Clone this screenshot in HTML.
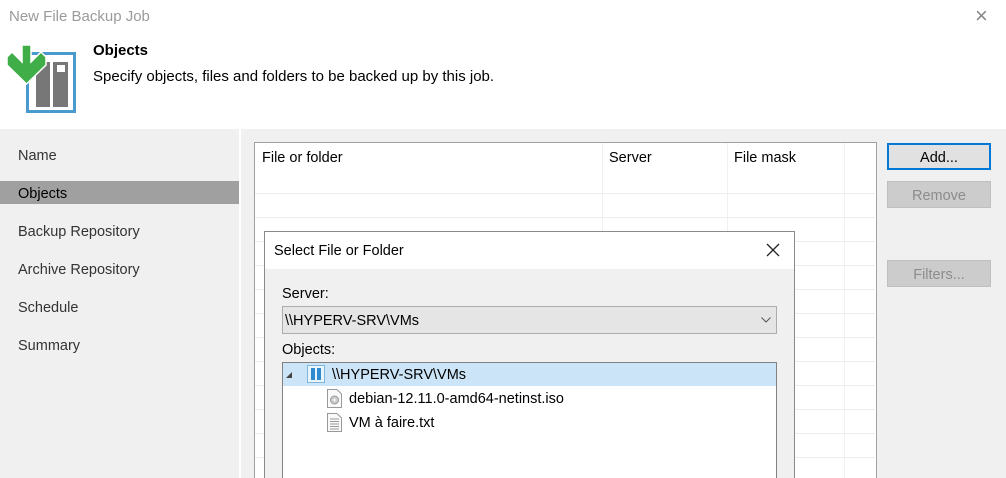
<!DOCTYPE html>
<html><head><meta charset="utf-8"><style>
*{margin:0;padding:0;box-sizing:border-box}
html,body{width:1006px;height:478px;overflow:hidden}
body{position:relative;background:#f0f0f0;font-family:"Segoe UI","Liberation Sans",sans-serif;font-size:15px;color:#000}
.a{position:absolute}
.hdr{left:0;top:0;width:1006px;height:129px;background:#fff}
.nav{font-size:14.5px;color:#333;left:18px}
.btn{left:887px;width:104px;height:27px;background:#e1e1e1;border:1px solid #adadad;text-align:center;line-height:29px;font-size:14.5px}
.dis{background:#cccccc;border-color:#bfbfbf;color:#8c8c8c}
.hl{left:255px;width:620px;height:1px;background:#ececec}
.vl{top:143px;width:1px;height:335px;background:#eef0f4}
</style></head><body>
<div class="a hdr"></div>
<div class="a" style="left:9px;top:8px;font-size:15px;color:#9a9a9a">New File Backup Job</div>
<div class="a" style="left:975px;top:3px;font-size:22px;color:#888;font-weight:300">×</div>
<svg class="a" style="left:0;top:40px" width="80" height="78" viewBox="0 0 80 78">
<rect x="27.5" y="13.5" width="47" height="58" fill="#fff" stroke="#4a9ad0" stroke-width="3"/>
<rect x="36" y="22" width="14" height="45" fill="#777"/>
<rect x="53" y="22" width="15" height="45" fill="#777"/>
<rect x="57" y="25" width="8" height="7" fill="#fff"/>
<path d="M22 5h9v17l10-10 5 5v8L26.5 44 7 25v-8l5-5 10 10z" fill="#3fae49" stroke="#fff" stroke-width="1.5"/>
</svg>
<div class="a" style="left:93px;top:42px;font-weight:bold;font-size:15px">Objects</div>
<div class="a" style="left:93px;top:68px;font-size:15px">Specify objects, files and folders to be backed up by this job.</div>
<div class="a" style="left:239px;top:129px;width:2px;height:349px;background:#fff"></div>
<div class="a" style="left:0;top:181px;width:239px;height:23px;background:#a0a0a0"></div>
<div class="a nav" style="top:148px">Name</div>
<div class="a nav" style="top:186px;color:#000">Objects</div>
<div class="a nav" style="top:224px">Backup Repository</div>
<div class="a nav" style="top:262px">Archive Repository</div>
<div class="a nav" style="top:300px">Schedule</div>
<div class="a nav" style="top:338px">Summary</div>
<div class="a" style="left:254px;top:142px;width:623px;height:340px;background:#fff;border:1px solid #a0a0a0"></div>
<div class="a vl" style="left:602px"></div><div class="a vl" style="left:727px"></div><div class="a vl" style="left:844px"></div>
<div class="a hl" style="top:193px"></div><div class="a hl" style="top:217px"></div><div class="a hl" style="top:241px"></div><div class="a hl" style="top:265px"></div><div class="a hl" style="top:289px"></div><div class="a hl" style="top:313px"></div><div class="a hl" style="top:337px"></div><div class="a hl" style="top:361px"></div><div class="a hl" style="top:385px"></div><div class="a hl" style="top:409px"></div><div class="a hl" style="top:433px"></div><div class="a hl" style="top:457px"></div>
<div class="a" style="left:262px;top:150px;font-size:14.5px">File or folder</div>
<div class="a" style="left:609px;top:150px;font-size:14.5px">Server</div>
<div class="a" style="left:734px;top:150px;font-size:14.5px">File mask</div>
<div class="a btn" style="top:143px;border:2px solid #0078d7;line-height:27px">Add...</div>
<div class="a btn dis" style="top:181px">Remove</div>
<div class="a btn dis" style="top:260px">Filters...</div>
<div class="a" style="left:264px;top:231px;width:531px;height:260px;background:#f0f0f0;border:1px solid #8a8a8a"></div>
<div class="a" style="left:265px;top:232px;width:529px;height:37px;background:#fff"></div>
<div class="a" style="left:274px;top:243px;font-size:14.5px">Select File or Folder</div>
<svg class="a" style="left:766px;top:243px" width="14" height="14"><path d="M1 1L13 13M13 1L1 13" stroke="#222" stroke-width="1.3"/></svg>
<div class="a" style="left:282px;top:286px;font-size:14.5px">Server:</div>
<div class="a" style="left:282px;top:306px;width:495px;height:28px;background:#e5e5e5;border:1px solid #adadad"></div>
<div class="a" style="left:285px;top:313px;font-size:14.5px">\\HYPERV-SRV\VMs</div>
<svg class="a" style="left:761px;top:317px" width="10" height="6"><path d="M0.5 0.5L5 5 9.5 0.5" fill="none" stroke="#555"/></svg>
<div class="a" style="left:282px;top:342px;font-size:14.5px">Objects:</div>
<div class="a" style="left:282px;top:362px;width:495px;height:120px;background:#fff;border:1px solid #828282"></div>
<div class="a" style="left:283px;top:363px;width:493px;height:23px;background:#cce4f7"></div>
<svg class="a" style="left:286px;top:372px" width="7" height="7"><path d="M6 0L6 6 0 6z" fill="#444"/></svg>
<svg class="a" style="left:307px;top:365px" width="18" height="18"><rect x="0.5" y="0.5" width="17" height="17" fill="#eaf4fb" stroke="#7fb5dd"/><rect x="4" y="3" width="4" height="12" fill="#2e8bcf"/><rect x="10" y="3" width="4" height="12" fill="#2e8bcf"/></svg>
<div class="a" style="left:332px;top:367px;font-size:14.5px">\\HYPERV-SRV\VMs</div>
<svg class="a" style="left:327px;top:389px" width="15" height="19"><path d="M0.5 0.5H10L14.5 5V18.5H0.5Z" fill="#fafafa" stroke="#999"/><circle cx="7.5" cy="11" r="4" fill="#ccc" stroke="#999"/><circle cx="7.5" cy="11" r="1.2" fill="#fff"/></svg>
<div class="a" style="left:349px;top:391px;font-size:14.5px">debian-12.11.0-amd64-netinst.iso</div>
<svg class="a" style="left:327px;top:413px" width="15" height="19"><path d="M0.5 0.5H10L14.5 5V18.5H0.5Z" fill="#fafafa" stroke="#999"/><path d="M3 6h9M3 8.5h9M3 11h9M3 13.5h9M3 16h9" stroke="#999"/></svg>
<div class="a" style="left:349px;top:415px;font-size:14.5px">VM à faire.txt</div>
</body></html>
